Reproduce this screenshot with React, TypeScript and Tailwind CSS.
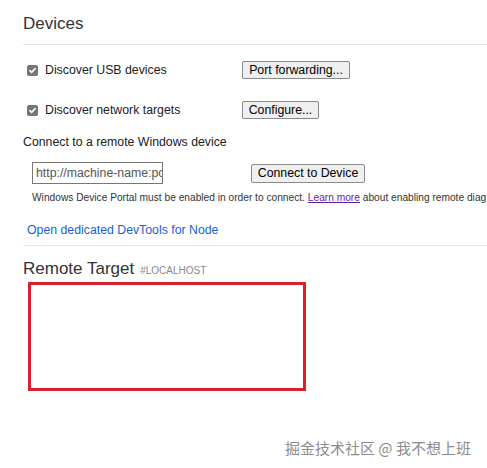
import React from 'react';

const CheckBox: React.FC = () => (
  <span className="flex h-[11px] w-[11px] shrink-0 items-center justify-center rounded-[2px] bg-[#767676]">
    <svg viewBox="0 0 12 12" className="h-[9px] w-[9px]" fill="none" stroke="white" strokeWidth={2} strokeLinecap="round" strokeLinejoin="round">
      <path d="M2.5 6.2l2.3 2.3 4.7-5" />
    </svg>
  </span>
);

const Btn: React.FC<{ children: React.ReactNode; className?: string }> = ({ children, className = '' }) => (
  <button className={`flex h-[18px] items-center justify-center whitespace-nowrap rounded-[2px] border border-[#8a8a8a] bg-[#efefef] px-[4px] text-[12.3px] leading-[16px] text-black ${className}`}>
    {children}
  </button>
);

export default function App() {
  return (
    <div className="relative h-[468px] w-[487px] overflow-hidden bg-white font-['Liberation_Sans',Arial,sans-serif] text-[#202124]">
      <div className="pl-[23px] pt-[12px]">
        {/* Devices */}
        <h2 className="h-[24px] text-[17px] leading-[24px] text-[#333]">Devices</h2>
        <div className="mt-[8px] h-px bg-[#e6e6e6]" />

        <div className="mt-[15px] flex flex-col gap-[20px] pl-[4px]">
          <div className="flex h-[20px] items-center">
            <div className="flex w-[215px] items-center gap-[7px]">
              <CheckBox />
              <span className="text-[12.3px]">Discover USB devices</span>
            </div>
            <Btn className="w-[108px]">Port forwarding...</Btn>
          </div>
          <div className="flex h-[20px] items-center">
            <div className="flex w-[215px] items-center gap-[7px]">
              <CheckBox />
              <span className="text-[12.3px]">Discover network targets</span>
            </div>
            <Btn className="w-[77px]">Configure...</Btn>
          </div>
        </div>

        <div className="mt-[14px] h-[16px] text-[12.3px] leading-[16px]">Connect to a remote Windows device</div>

        <div className="mt-[12px] flex h-[22px] items-center pl-[9px]">
          <div className="flex h-[22px] w-[131px] items-center overflow-hidden whitespace-nowrap border border-[#767676] px-[3px] text-[12.3px] text-[#545454]">
            http://machine-name:port
          </div>
          <Btn className="ml-[88px] h-[19px] w-[114px]">Connect to Device</Btn>
        </div>

        <div className="mt-[8px] h-[12px] whitespace-nowrap pl-[9px] text-[10.2px] leading-[12px] text-[#333]">
          Windows Device Portal must be enabled in order to connect.{' '}
          <span className="text-[#681da8] underline">Learn more</span> about enabling remote diag
        </div>

        <div className="mt-[18px] h-[16px] pl-[4px] text-[12.3px] leading-[16px] text-[#1a5fd0]">Open dedicated DevTools for Node</div>

        <div className="mt-[7px] h-px bg-[#e6e6e6]" />

        {/* Remote Target */}
        <div className="mt-[11px] flex h-[24px] items-baseline gap-[6px]">
          <span className="text-[17px] leading-[24px] text-[#333]">Remote Target</span>
          <span className="text-[10px] uppercase text-[#888]">#localhost</span>
        </div>

        <div className="ml-[5px] mt-[1px] h-[109px] w-[278px] border-[3px] border-[#d7222d]" />
      </div>

      <div className="absolute left-[285px] top-[439px] whitespace-nowrap font-['Noto_Sans_CJK_SC',sans-serif] text-[15px] leading-[18px] text-[#8c8c8c] [text-shadow:0_0_1px_white,0_0_2px_white]">
        掘金技术社区 @ 我不想上班
      </div>
    </div>
  );
}
